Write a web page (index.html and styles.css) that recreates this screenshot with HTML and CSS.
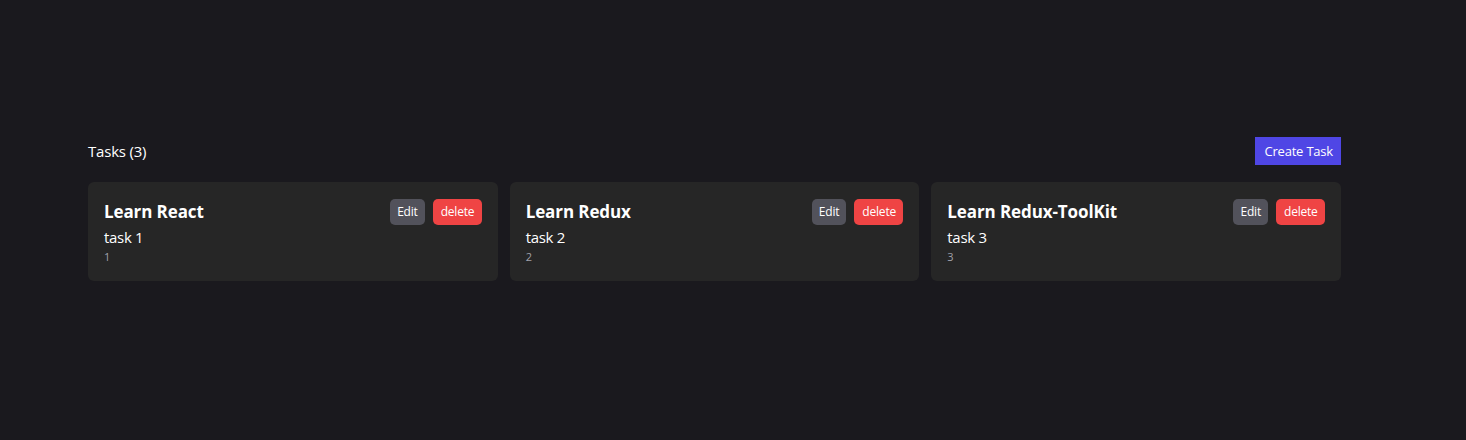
FILE: index.html
```html
<!DOCTYPE html>
<html lang="en">
<head>
<meta charset="utf-8">
<title>Tasks</title>
<link rel="stylesheet" href="styles.css">
</head>
<body>
<main class="page">
  <div class="toolbar">
    <h2 class="count">Tasks (3)</h2>
    <button class="btn-create">Create Task</button>
  </div>
  <div class="grid">
    <div class="card">
      <div class="card-head">
        <h3 class="title">Learn React</h3>
        <div class="actions">
          <button class="btn btn-edit">Edit</button>
          <button class="btn btn-delete">delete</button>
        </div>
      </div>
      <p class="desc">task 1</p>
      <p class="id">1</p>
    </div>
    <div class="card">
      <div class="card-head">
        <h3 class="title">Learn Redux</h3>
        <div class="actions">
          <button class="btn btn-edit">Edit</button>
          <button class="btn btn-delete">delete</button>
        </div>
      </div>
      <p class="desc">task 2</p>
      <p class="id">2</p>
    </div>
    <div class="card">
      <div class="card-head">
        <h3 class="title">Learn Redux-ToolKit</h3>
        <div class="actions">
          <button class="btn btn-edit">Edit</button>
          <button class="btn btn-delete">delete</button>
        </div>
      </div>
      <p class="desc">task 3</p>
      <p class="id">3</p>
    </div>
  </div>
</main>
</body>
</html>
```
FILE: styles.css
```css
* { box-sizing: border-box; }
html, body {
  margin: 0;
  height: 100%;
  background: #1a191e;
  color: #fff;
  font-family: "Segoe UI", "Open Sans", sans-serif;
}
.page {
  width: 1253px;
  margin-left: 88px;
  padding-top: 137px;
}
.toolbar {
  display: flex;
  align-items: center;
  justify-content: space-between;
  height: 28px;
}
.count {
  margin: 0;
  font-size: 15px;
  font-weight: 400;
  letter-spacing: -0.2px;
}
.btn-create {
  height: 28px;
  padding: 0 8px 0 9px;
  border: none;
  background: #4f46e5;
  color: #fff;
  font-family: inherit;
  font-size: 13px;
  letter-spacing: -0.2px;
  cursor: pointer;
}
.grid {
  margin-top: 17px;
  display: grid;
  grid-template-columns: repeat(3, 1fr);
  gap: 12px;
}
.card {
  background: #262626;
  border-radius: 6px;
  padding: 16px;
  height: 99px;
}
.card-head {
  display: flex;
  align-items: center;
  justify-content: space-between;
  height: 27px;
}
.title {
  margin: 0;
  font-size: 17px;
  font-weight: 700;
  letter-spacing: -0.1px;
}
.actions {
  display: flex;
  gap: 8px;
}
.btn {
  height: 26px;
  padding: 0 8px;
  border: none;
  border-radius: 5px;
  color: #fff;
  font-family: inherit;
  font-size: 12px;
  letter-spacing: -0.2px;
  cursor: pointer;
}
.btn-edit { background: #52525b; padding: 0 7px; }
.btn-delete { background: #ef4444; padding: 0 8px 0 8px; width: 49px; }
.desc {
  margin: 0;
  font-size: 15px;
  line-height: 24px;
  letter-spacing: -0.3px;
}
.id {
  margin: 0;
  font-size: 11px;
  line-height: 16px;
  color: #a1a1aa;
}
```
